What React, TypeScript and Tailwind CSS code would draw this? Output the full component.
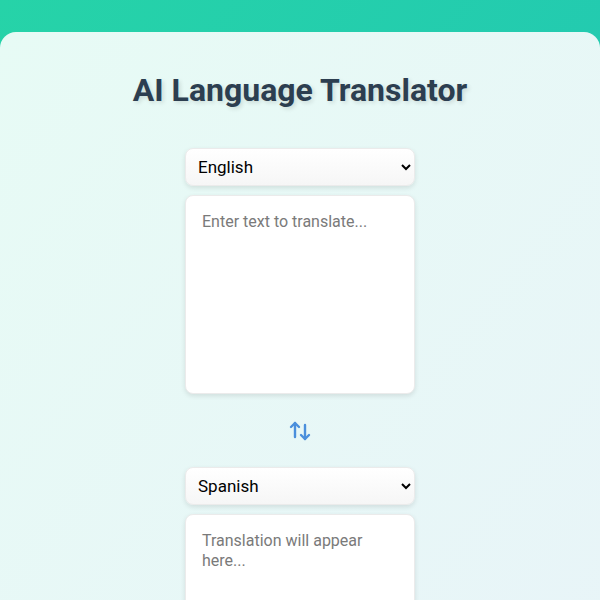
import { useState } from "react";

const languages = ["English", "Spanish", "French", "German", "Italian", "Japanese", "Chinese"];

function SwapIcon() {
  return (
    <svg width="24" height="22" viewBox="0 0 24 22" fill="none" stroke="#4a8fdc" strokeWidth="2.4" strokeLinecap="round" strokeLinejoin="round">
      <path d="M7 17V3" />
      <path d="M3 7l4-4 4 4" />
      <path d="M17 5v14" />
      <path d="M13 15l4 4 4-4" />
    </svg>
  );
}

export default function App() {
  const [source, setSource] = useState("English");
  const [target, setTarget] = useState("Spanish");
  const [text, setText] = useState("");

  const swap = () => {
    setSource(target);
    setTarget(source);
  };

  return (
    <div
      className="min-h-[600px] bg-gradient-to-br from-[#26d3a8] to-[#21c3b6] pt-8"
      style={{ fontFamily: "Roboto, 'Liberation Sans', sans-serif" }}
    >
      <div className="min-h-[568px] rounded-t-2xl bg-gradient-to-br from-[#e7fbf5] to-[#e8f4f8] px-4 pt-[38px] pb-10">
        <h1 className="text-center text-[32px] leading-[40px] font-bold text-[#2c3e50] [text-shadow:2px_2px_4px_rgba(0,0,0,0.12)]">
          AI Language Translator
        </h1>

        <div className="mx-auto mt-[38px] flex w-[230px] flex-col">
          {/* Source */}
          <select
            value={source}
            onChange={(e) => setSource(e.target.value)}
            className="h-[38px] w-full rounded-lg border border-[#ebebeb] bg-gradient-to-b from-white to-[#f6f6f6] px-2 text-[17px] text-black shadow-[0_2px_5px_rgba(0,0,0,0.1)] outline-none"
          >
            {languages.map((l) => (
              <option key={l}>{l}</option>
            ))}
          </select>
          <textarea
            value={text}
            onChange={(e) => setText(e.target.value)}
            placeholder="Enter text to translate..."
            className="mt-[9px] h-[199px] w-full resize-none rounded-lg border border-[#ebebeb] bg-white px-4 py-[16px] text-[16px] leading-[20px] text-black shadow-[0_2px_5px_rgba(0,0,0,0.1)] outline-none placeholder:text-[#7a7a7a]"
          />

          {/* Swap */}
          <div className="flex h-[73px] items-center justify-center">
            <button onClick={swap} className="flex items-center justify-center">
              <SwapIcon />
            </button>
          </div>

          {/* Target */}
          <select
            value={target}
            onChange={(e) => setTarget(e.target.value)}
            className="h-[38px] w-full rounded-lg border border-[#ebebeb] bg-gradient-to-b from-white to-[#f6f6f6] px-2 text-[17px] text-black shadow-[0_2px_5px_rgba(0,0,0,0.1)] outline-none"
          >
            {languages.map((l) => (
              <option key={l}>{l}</option>
            ))}
          </select>
          <textarea
            readOnly
            placeholder="Translation will appear here..."
            className="mt-[9px] h-[199px] w-full resize-none rounded-lg border border-[#ebebeb] bg-white px-4 py-[16px] text-[16px] leading-[20px] text-black shadow-[0_2px_5px_rgba(0,0,0,0.1)] outline-none placeholder:text-[#7a7a7a]"
          />
        </div>
      </div>
    </div>
  );
}
